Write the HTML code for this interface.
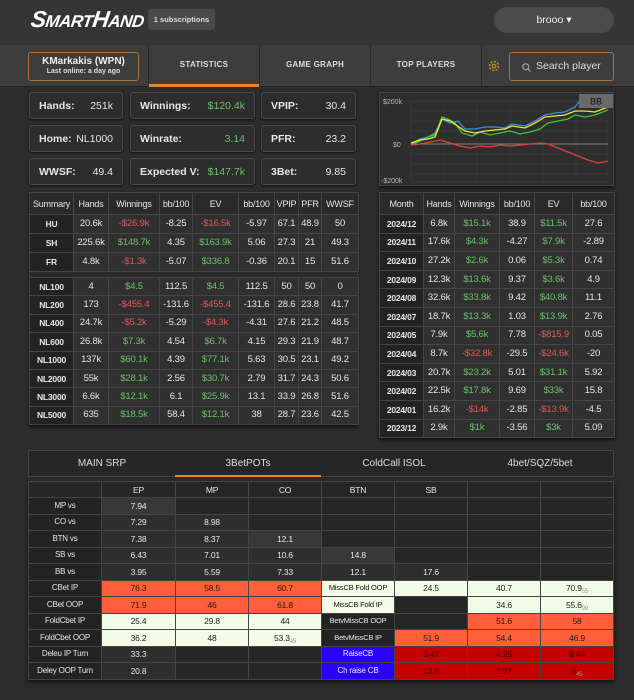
<!DOCTYPE html>
<html><head><meta charset="utf-8"><style>
*{box-sizing:border-box;margin:0;padding:0}
body{width:634px;height:700px;background:#2c2c2c;font-family:"Liberation Sans",sans-serif;color:#e6e6e6;position:relative;overflow:hidden}
.abs{position:absolute}
.hdr{left:0;top:0;width:634px;height:45px;background:#353535}
.nav{left:0;top:45px;width:634px;height:42px;background:#3d3d3d;border-bottom:1px solid #232323}
.logo{left:31px;top:6px;font-style:italic;font-weight:bold;color:#fff;font-size:23px;letter-spacing:-0.5px;transform:skewX(-8deg)}
.logo small{font-size:17px}
.badge{left:148px;top:9px;width:67px;height:21px;background:#4a4a4a;border-radius:3px;font-size:7.5px;font-weight:bold;color:#ddd;text-align:center;line-height:21px}
.brooo{left:494px;top:7px;width:120px;height:26px;background:#4b4b4b;border-radius:13px;font-size:10.5px;text-align:center;line-height:26px;color:#eee}
.pbox{left:28px;top:52px;width:111px;height:29px;border:1px solid #b0703a;border-radius:3px;text-align:center;font-weight:bold}
.tab{top:45px;height:42px;width:111px;border-left:1px solid #2a2a2a;text-align:center;line-height:40px;font-size:8px;font-weight:bold;color:#ddd;letter-spacing:.3px}
.search{left:509px;top:52px;width:105px;height:29px;border:1px solid #b0703a;border-radius:3px;font-size:10.5px;color:#ddd;line-height:27px;padding-left:26px}
.sbox{height:27px;border:1px solid #4a4a4a;border-radius:3px;background:#2d2d2d;font-size:10.5px;font-weight:bold;padding:0 9px;display:flex;justify-content:space-between;align-items:center;box-shadow:0 1px 2px #111}
.sbox span:last-child{font-weight:normal}
.g{color:#6cc06a!important}.r{color:#e25858!important}
table{border-collapse:collapse;font-size:9.5px;text-align:center;table-layout:fixed;letter-spacing:-0.2px}
td,th{border:1px solid #454545;padding:0;color:#e6e6e6;white-space:nowrap;line-height:10px;vertical-align:middle}
th{font-weight:normal;background:#2a2a2a;font-size:9px}
.t1 td,.t2 td{background:#303030}
.t1 td:first-child,.t2 td:first-child{background:#232323;font-size:8.5px;font-weight:bold}
.t3 td{background:#2e2e2e;font-size:8.5px}
.t3 td:first-child{background:#232323;font-size:8px}
.t3 td.o{background:#ff5e3b;color:#2a1a10}
.t3 td.w{background:#f1fbe6;color:#222}
.t3 td.d{background:#c70000;color:#3a0000}
.t3 td.b{background:#2a00ff;color:#eee;font-size:8px}
.t3 td.wl{background:#f1fbe6;color:#111;font-size:7.5px}
.t3 td.lb{background:#232323;font-size:7.5px}
.t3 td.dk{background:#262626}
sub{font-size:6px;color:#999;vertical-align:baseline;position:relative;top:2px;line-height:0}
</style></head><body>
<div class="abs hdr"></div>
<div class="abs logo">S<small>MART</small>H<small>AND</small></div>
<div class="abs badge">1 subscriptions</div>
<div class="abs brooo">brooo ▾</div>
<div class="abs nav"></div>
<div class="abs pbox"><div style="font-size:10px;margin-top:3px;color:#eee">KMarkakis (WPN)</div><div style="font-size:7px;color:#ddd;margin-top:1px">Last online: a day ago</div></div>
<div class="abs tab" style="left:148px;">STATISTICS<div style="position:absolute;left:0;bottom:0;width:111px;height:3px;background:#e8832a"></div></div>
<div class="abs tab" style="left:259px">GAME GRAPH</div>
<div class="abs tab" style="left:370px">TOP PLAYERS</div>
<div class="abs tab" style="left:481px;width:1px"></div>
<svg class="abs" style="left:487px;top:59px" width="14" height="14" viewBox="0 0 14 14"><circle cx="7" cy="7" r="4.5" fill="none" stroke="#c89020" stroke-width="1.5" stroke-dasharray="2 1.5"/><circle cx="7" cy="7" r="1.8" fill="none" stroke="#c89020" stroke-width="1.2"/></svg>
<div class="abs search"><svg style="position:absolute;left:12px;top:10px" width="9" height="9"><circle cx="3.8" cy="3.8" r="3" fill="none" stroke="#aaa" stroke-width="1.1"/><path d="M6 6L8.5 8.5" stroke="#aaa" stroke-width="1.1"/></svg>Search player</div>

<div class="abs sbox" style="left:29px;top:92px;width:94px"><span>Hands:</span><span>251k</span></div>
<div class="abs sbox" style="left:130px;top:92px;width:125px"><span>Winnings:</span><span class="g">$120.4k</span></div>
<div class="abs sbox" style="left:261px;top:92px;width:95px"><span>VPIP:</span><span>30.4</span></div>
<div class="abs sbox" style="left:29px;top:125px;width:94px"><span>Home:</span><span>NL1000</span></div>
<div class="abs sbox" style="left:130px;top:125px;width:125px"><span>Winrate:</span><span class="g">3.14</span></div>
<div class="abs sbox" style="left:261px;top:125px;width:95px"><span>PFR:</span><span>23.2</span></div>
<div class="abs sbox" style="left:29px;top:158px;width:94px"><span>WWSF:</span><span>49.4</span></div>
<div class="abs sbox" style="left:130px;top:158px;width:125px"><span>Expected V:</span><span class="g">$147.7k</span></div>
<div class="abs sbox" style="left:261px;top:158px;width:95px"><span>3Bet:</span><span>9.85</span></div>

<div class="abs" style="left:29px;top:192px;width:329px;height:233px;background:#2a2a2a;border:1px solid #444;box-shadow:0 2px 3px #111"></div>
<table class="abs t1" style="left:29px;top:192px;width:329px">
<colgroup><col style="width:44px"><col style="width:35px"><col style="width:51px"><col style="width:33px"><col style="width:46px"><col style="width:36px"><col style="width:24px"><col style="width:23px"><col style="width:37px"></colgroup>
<tr style="height:22px"><th>Summary</th><th>Hands</th><th>Winnings</th><th>bb/100</th><th>EV</th><th>bb/100</th><th>VPIP</th><th>PFR</th><th>WWSF</th></tr>
<tr style="height:19px"><td>HU</td><td>20.6k</td><td class="r">-$26.9k</td><td>-8.25</td><td class="r">-$16.5k</td><td>-5.97</td><td>67.1</td><td>48.9</td><td>50</td></tr>
<tr style="height:19px"><td>SH</td><td>225.6k</td><td class="g">$148.7k</td><td>4.35</td><td class="g">$163.9k</td><td>5.06</td><td>27.3</td><td>21</td><td>49.3</td></tr>
<tr style="height:19px"><td>FR</td><td>4.8k</td><td class="r">-$1.3k</td><td>-5.07</td><td class="g">$336.8</td><td>-0.36</td><td>20.1</td><td>15</td><td>51.6</td></tr>
</table>
<table class="abs t1" style="left:29px;top:277px;width:329px">
<colgroup><col style="width:44px"><col style="width:35px"><col style="width:51px"><col style="width:33px"><col style="width:46px"><col style="width:36px"><col style="width:24px"><col style="width:23px"><col style="width:37px"></colgroup>
<tr style="height:18.4px"><td>NL100</td><td>4</td><td class="g">$4.5</td><td>112.5</td><td class="g">$4.5</td><td>112.5</td><td>50</td><td>50</td><td>0</td></tr>
<tr style="height:18.4px"><td>NL200</td><td>173</td><td class="r">-$455.4</td><td>-131.6</td><td class="r">-$455.4</td><td>-131.6</td><td>28.6</td><td>23.8</td><td>41.7</td></tr>
<tr style="height:18.4px"><td>NL400</td><td>24.7k</td><td class="r">-$5.2k</td><td>-5.29</td><td class="r">-$4.3k</td><td>-4.31</td><td>27.6</td><td>21.2</td><td>48.5</td></tr>
<tr style="height:18.4px"><td>NL600</td><td>26.8k</td><td class="g">$7.3k</td><td>4.54</td><td class="g">$6.7k</td><td>4.15</td><td>29.3</td><td>21.9</td><td>48.7</td></tr>
<tr style="height:18.4px"><td>NL1000</td><td>137k</td><td class="g">$60.1k</td><td>4.39</td><td class="g">$77.1k</td><td>5.63</td><td>30.5</td><td>23.1</td><td>49.2</td></tr>
<tr style="height:18.4px"><td>NL2000</td><td>55k</td><td class="g">$28.1k</td><td>2.56</td><td class="g">$30.7k</td><td>2.79</td><td>31.7</td><td>24.3</td><td>50.6</td></tr>
<tr style="height:18.4px"><td>NL3000</td><td>6.6k</td><td class="g">$12.1k</td><td>6.1</td><td class="g">$25.9k</td><td>13.1</td><td>33.9</td><td>26.8</td><td>51.6</td></tr>
<tr style="height:18.4px"><td>NL5000</td><td>635</td><td class="g">$18.5k</td><td>58.4</td><td class="g">$12.1k</td><td>38</td><td>28.7</td><td>23.6</td><td>42.5</td></tr>
</table>

<svg class="abs" style="left:379px;top:92px;background:#2e2e2e;border:1px solid #444;box-shadow:0 2px 3px #111" width="235" height="94">
<g stroke="#3c3c3c" stroke-width="0.7">
<line x1="31" y1="8" x2="228" y2="8"/><line x1="31" y1="18" x2="228" y2="18"/><line x1="31" y1="28" x2="228" y2="28"/><line x1="31" y1="38" x2="228" y2="38"/><line x1="31" y1="61" x2="228" y2="61"/><line x1="31" y1="71" x2="228" y2="71"/><line x1="31" y1="81" x2="228" y2="81"/><line x1="31" y1="89" x2="228" y2="89"/>
<line x1="31" y1="8" x2="31" y2="89"/><line x1="64" y1="8" x2="64" y2="89"/><line x1="97" y1="8" x2="97" y2="89"/><line x1="130" y1="8" x2="130" y2="89"/><line x1="163" y1="8" x2="163" y2="89"/><line x1="196" y1="8" x2="196" y2="89"/><line x1="228" y1="8" x2="228" y2="89"/></g>
<line x1="31" y1="51" x2="228" y2="51" stroke="#999" stroke-width="0.8"/>
<text x="3" y="11" font-size="7" fill="#bbb" font-family="Liberation Sans">$200k</text>
<text x="13" y="54" font-size="7" fill="#bbb" font-family="Liberation Sans">$0</text>
<text x="1" y="90" font-size="7" fill="#bbb" font-family="Liberation Sans">-$200k</text>
<polyline fill="none" stroke="#3a8fe0" stroke-width="1.3" points="31,51 40,46 48,44 55,40 62,26 70,30 78,28 85,36 95,36 105,34 115,34 125,35 132,31 145,33 155,28 165,22 175,20 185,19 195,14 202,5 208,10 215,12 228,8"/>
<polyline fill="none" stroke="#40c040" stroke-width="1.3" points="31,52 40,48 48,44 55,42 62,24 70,27 75,30 82,40 92,43 100,39 110,42 120,40 130,38 140,41 150,39 160,36 168,30 178,28 188,26 195,22 205,24 215,22 228,17"/>
<polyline fill="none" stroke="#f0e830" stroke-width="1.3" points="31,50 40,47 48,46 55,44 62,26 70,28 76,32 85,38 95,40 105,38 115,37 125,36 132,33 145,35 155,30 165,24 175,23 185,22 195,18 205,18 215,19 228,14"/>
<polyline fill="none" stroke="#e04040" stroke-width="1.3" points="31,52 40,51 50,49 60,47 70,50 80,53 90,55 100,53 110,54 120,52 130,53 140,52 150,51 160,50 168,51 178,55 188,59 198,63 208,67 218,70 228,68"/>
<rect x="199" y="1" width="35" height="14" fill="#6a6a6a"/><text x="216" y="11.5" font-size="9" fill="#111" text-anchor="middle" font-family="Liberation Sans">BB</text>
</svg>

<table class="abs t2" style="left:379px;top:192px;width:235px;box-shadow:0 2px 3px #111">
<colgroup><col style="width:44px"><col style="width:31px"><col style="width:45px"><col style="width:35px"><col style="width:38px"><col style="width:42px"></colgroup>
<tr style="height:22px"><th>Month</th><th>Hands</th><th>Winnings</th><th>bb/100</th><th>EV</th><th>bb/100</th></tr>
<tr style="height:18.6px"><td>2024/12</td><td>6.8k</td><td class="g">$15.1k</td><td>38.9</td><td class="g">$11.5k</td><td>27.6</td></tr>
<tr style="height:18.6px"><td>2024/11</td><td>17.6k</td><td class="g">$4.3k</td><td>-4.27</td><td class="g">$7.9k</td><td>-2.89</td></tr>
<tr style="height:18.6px"><td>2024/10</td><td>27.2k</td><td class="g">$2.6k</td><td>0.06</td><td class="g">$5.3k</td><td>0.74</td></tr>
<tr style="height:18.6px"><td>2024/09</td><td>12.3k</td><td class="g">$13.6k</td><td>9.37</td><td class="g">$3.6k</td><td>4.9</td></tr>
<tr style="height:18.6px"><td>2024/08</td><td>32.6k</td><td class="g">$33.8k</td><td>9.42</td><td class="g">$40.8k</td><td>11.1</td></tr>
<tr style="height:18.6px"><td>2024/07</td><td>18.7k</td><td class="g">$13.3k</td><td>1.03</td><td class="g">$13.9k</td><td>2.76</td></tr>
<tr style="height:18.6px"><td>2024/05</td><td>7.9k</td><td class="g">$5.6k</td><td>7.78</td><td class="r">-$815.9</td><td>0.05</td></tr>
<tr style="height:18.6px"><td>2024/04</td><td>8.7k</td><td class="r">-$32.8k</td><td>-29.5</td><td class="r">-$24.6k</td><td>-20</td></tr>
<tr style="height:18.6px"><td>2024/03</td><td>20.7k</td><td class="g">$23.2k</td><td>5.01</td><td class="g">$31.1k</td><td>5.92</td></tr>
<tr style="height:18.6px"><td>2024/02</td><td>22.5k</td><td class="g">$17.8k</td><td>9.69</td><td class="g">$33k</td><td>15.8</td></tr>
<tr style="height:18.6px"><td>2024/01</td><td>16.2k</td><td class="r">-$14k</td><td>-2.85</td><td class="r">-$13.9k</td><td>-4.5</td></tr>
<tr style="height:18.6px"><td>2023/12</td><td>2.9k</td><td class="g">$1k</td><td>-3.56</td><td class="g">$3k</td><td>5.09</td></tr>
</table>

<div class="abs" style="left:28px;top:450px;width:586px;height:27px;background:#262626;border:1px solid #444;font-size:10px;color:#ddd">
<div class="abs" style="left:0;width:146px;text-align:center;line-height:25px">MAIN SRP</div>
<div class="abs" style="left:146px;width:146px;text-align:center;line-height:25px">3BetPOTs<div style="position:absolute;left:0;top:24px;width:146px;height:2px;background:#e8832a"></div></div>
<div class="abs" style="left:292px;width:146px;text-align:center;line-height:25px">ColdCall ISOL</div>
<div class="abs" style="left:438px;width:146px;text-align:center;line-height:25px">4bet/SQZ/5bet</div>
</div>

<table class="abs t3" style="left:28px;top:481px;width:585px;box-shadow:0 2px 4px #111">
<colgroup><col style="width:73px"><col style="width:74px"><col style="width:73px"><col style="width:73px"><col style="width:73px"><col style="width:73px"><col style="width:73px"><col style="width:73px"></colgroup>
<tr style="height:16px"><td class="dk" style="background:#262626"></td><td class="dk">EP</td><td class="dk">MP</td><td class="dk">CO</td><td class="dk">BTN</td><td class="dk">SB</td><td class="dk"></td><td class="dk"></td></tr>
<tr style="height:16.5px"><td>MP vs</td><td style="background:#383838">7.94</td><td class="dk"></td><td class="dk"></td><td class="dk"></td><td class="dk"></td><td class="dk"></td><td class="dk"></td></tr>
<tr style="height:16.5px"><td>CO vs</td><td>7.29</td><td>8.98</td><td class="dk"></td><td class="dk"></td><td class="dk"></td><td class="dk"></td><td class="dk"></td></tr>
<tr style="height:16.5px"><td>BTN vs</td><td>7.38</td><td>8.37</td><td style="background:#383838">12.1</td><td class="dk"></td><td class="dk"></td><td class="dk"></td><td class="dk"></td></tr>
<tr style="height:16.5px"><td>SB vs</td><td>6.43</td><td>7.01</td><td>10.6</td><td style="background:#383838">14.8</td><td class="dk"></td><td class="dk"></td><td class="dk"></td></tr>
<tr style="height:16.5px"><td>BB vs</td><td>3.95</td><td>5.59</td><td>7.33</td><td>12.1</td><td>17.6</td><td class="dk"></td><td class="dk"></td></tr>
<tr style="height:16.5px"><td>CBet IP</td><td class="o">76.3</td><td class="o">58.5</td><td class="o">60.7</td><td class="wl">MissCB Fold OOP</td><td class="w">24.5</td><td class="w">40.7</td><td class="w">70.9<sub>55</sub></td></tr>
<tr style="height:16.5px"><td>CBet OOP</td><td class="o">71.9</td><td class="o">46</td><td class="o">61.8</td><td class="wl">MissCB Fold IP</td><td class="dk"></td><td class="w">34.6</td><td class="w">55.6<sub>99</sub></td></tr>
<tr style="height:16.5px"><td>FoldCbet IP</td><td class="w">25.4</td><td class="w">29.8</td><td class="w">44</td><td class="lb">BetvMissCB OOP</td><td class="dk"></td><td class="o">51.6</td><td class="o">58</td></tr>
<tr style="height:16.5px"><td>FoldCbet OOP</td><td class="w">36.2</td><td class="w">48</td><td class="w">53.3<sub>45</sub></td><td class="lb">BetvMissCB IP</td><td class="o">51.9</td><td class="o">54.4</td><td class="o">46.9</td></tr>
<tr style="height:16.5px"><td>Deleu IP Turn</td><td>33.3</td><td class="dk"></td><td class="dk"></td><td class="b">RaiseCB</td><td class="d">3.47</td><td class="d">4.25</td><td class="d">8.44</td></tr>
<tr style="height:16.5px"><td>Deley OOP Turn</td><td>20.8</td><td class="dk"></td><td class="dk"></td><td class="b">Ch raise CB</td><td class="d">13.6</td><td class="d">2.97</td><td class="d">0<sub>45</sub></td></tr>
</table>
</body></html>
